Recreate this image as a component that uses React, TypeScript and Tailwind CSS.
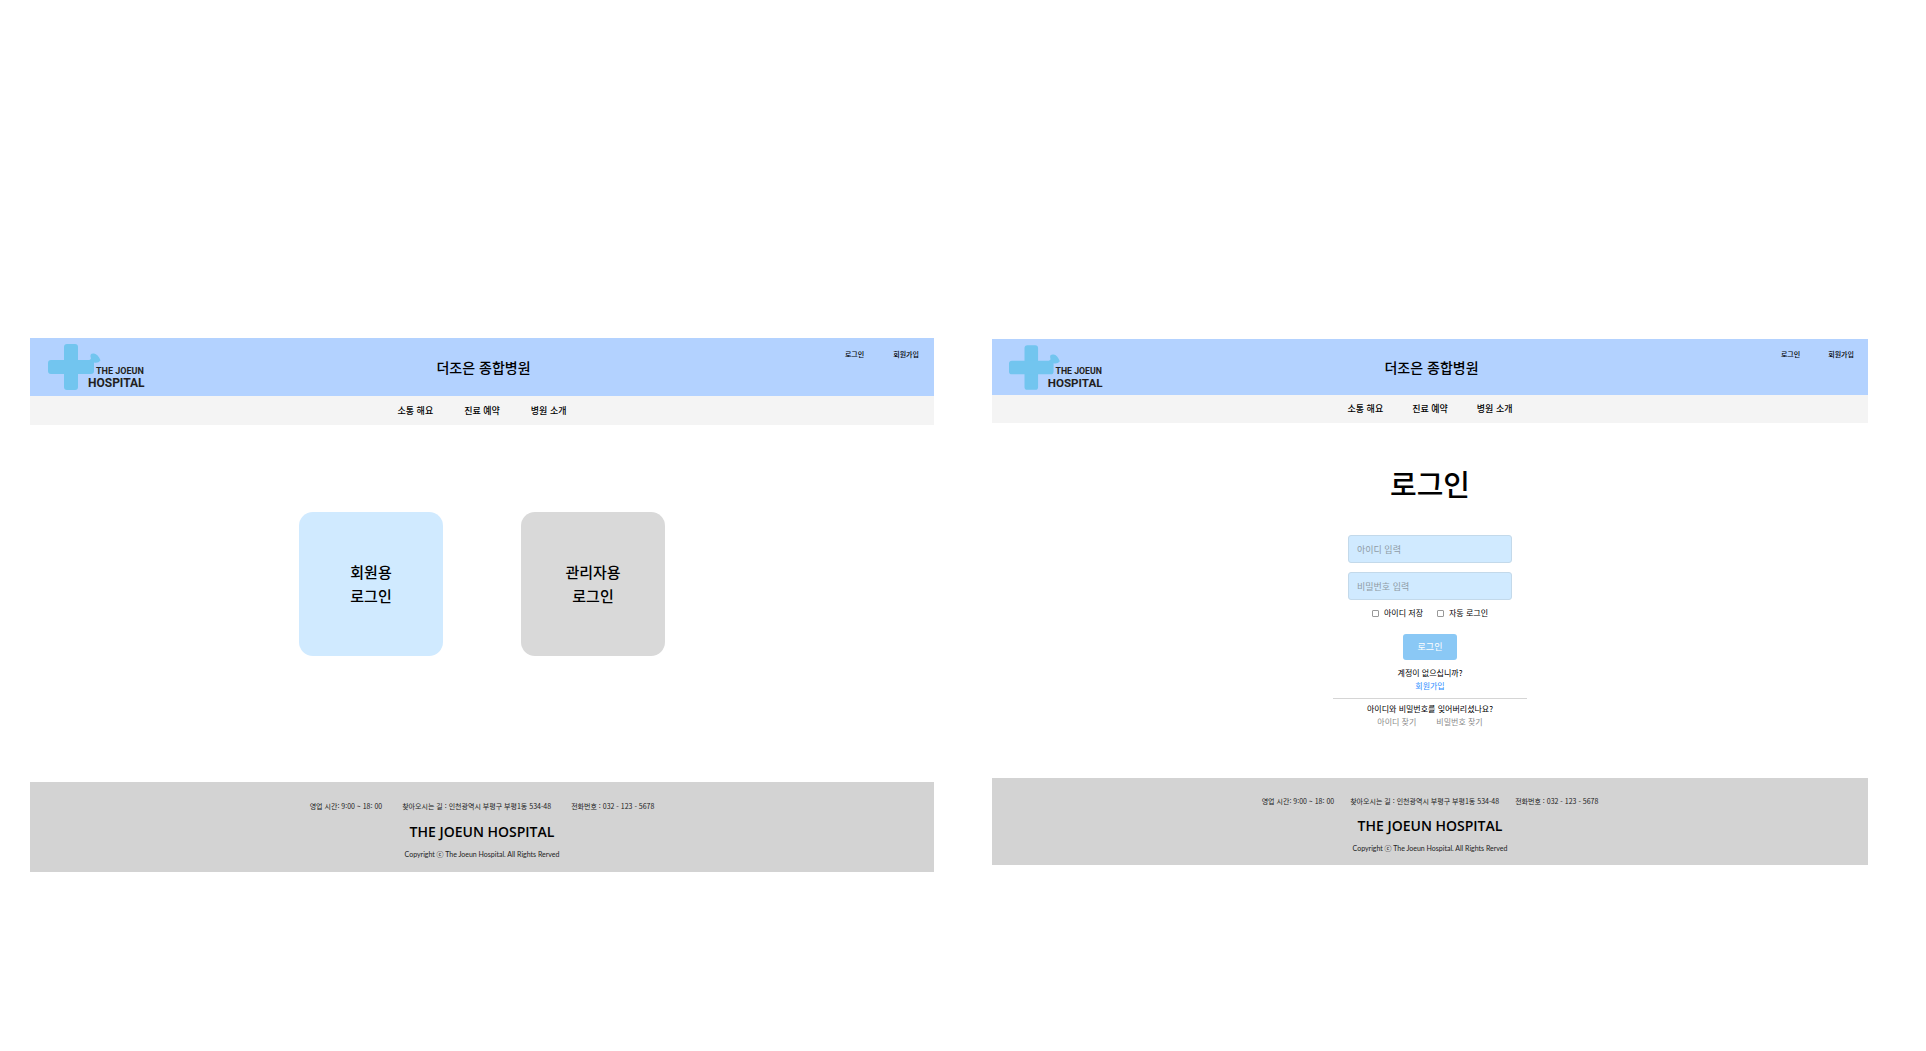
import React from "react";

const NAV = ["소통 해요", "진료 예약", "병원 소개"];

function Logo({ className }: { className: string }) {
  return (
    <svg viewBox="0 0 97 46" className={className} role="img" aria-label="The Joeun Hospital">
      <g fill="#72c5ef">
        <rect x="16" y="0" width="14" height="46" rx="3" />
        <path d="M3 16H41Q42 16 43 14.500Q41 9 46 9.500Q50 10 52.500 16.500Q50 19.500 46 18.500V27Q46 30 43 30H3Q0 30 0 27V19Q0 16 3 16Z" />
      </g>
      <g fill="#231f20" fontFamily="Roboto, sans-serif" fontWeight="700">
        <text x="48" y="30" fontSize="9">THE JOEUN</text>
        <text x="40" y="43" fontSize="12">HOSPITAL</text>
      </g>
    </svg>
  );
}

function Header({ large }: { large: boolean }) {
  return (
    <header>
      <div
        className={`grid grid-cols-[1fr_auto_1fr] items-center bg-[#b3d2ff] ${large ? "h-[58px] pl-[18px] pr-[15px]" : "h-14 pl-[17px] pr-[14px]"}`}
      >
        <a href="#home">
          <Logo className={large ? "h-[46px] w-[97px]" : "h-[45px] w-[94px]"} />
        </a>
        <h1 className="text-[14px] leading-5 font-medium">더조은 종합병원</h1>
        <div
          className={`flex justify-end self-start text-[7px] leading-[10px] font-medium ${large ? "gap-[29px] pt-[11px]" : "gap-7 pt-[10px]"}`}
        >
          <a href="#login">로그인</a>
          <a href="#join">회원가입</a>
        </div>
      </div>
      <nav
        className={`flex items-center justify-center bg-[#f4f4f4] text-[9px] leading-3 font-medium ${large ? "h-[29px] gap-[31px]" : "h-7 gap-[29px]"}`}
      >
        {NAV.map((item) => (
          <a key={item} href="#menu">
            {item}
          </a>
        ))}
      </nav>
    </header>
  );
}

function Footer({ large }: { large: boolean }) {
  return (
    <footer
      className={`flex flex-col items-center bg-[#d3d3d3] ${large ? "h-[90px] pt-[19px]" : "h-[87px] pt-[18px]"}`}
    >
      <p className={`flex text-[7px] leading-[10px] text-[#222] ${large ? "gap-5" : "gap-4"}`}>
        <span>영업 시간: 9:00 ~ 18: 00</span>
        <span>찾아오시는 길 : 인천광역시 부평구 부평1동 534-48</span>
        <span>전화번호 : 032 - 123 - 5678</span>
      </p>
      <p
        className={`font-['Open_Sans',sans-serif] text-[14px] leading-4 font-semibold ${large ? "mt-[13px]" : "mt-3"}`}
      >
        THE JOEUN HOSPITAL
      </p>
      <p className="mt-[9px] font-['Lato','Noto_Sans_CJK_KR',sans-serif] text-[7px] leading-[10px] text-[#222]">
        Copyright ⓒ The Joeun Hospital. All Rights Rerved
      </p>
    </footer>
  );
}

function LoginCard({ label, className }: { label: string; className: string }) {
  return (
    <button
      type="button"
      className={`size-36 rounded-[14px] text-[15px] leading-6 font-medium ${className}`}
    >
      {label}
      <br />
      로그인
    </button>
  );
}

const FIELD =
  "h-7 w-full rounded-[3px] border border-[#c3d9ea] bg-[#d0eaff] px-2 text-[9px] leading-3 placeholder:text-[#8f9ba5]";

function Check({ label }: { label: string }) {
  return (
    <label className="flex items-center gap-[5px]">
      <input
        type="checkbox"
        className="size-[7px] appearance-none rounded-[1px] border border-[#999] bg-white checked:bg-[#8ac8f5]"
      />
      {label}
    </label>
  );
}

function LoginForm() {
  return (
    <form className="flex flex-col items-center pt-[38px] text-[8px] leading-3">
      <h2 className="text-[29px] leading-[44px] font-medium">로그인</h2>
      <div className="mt-[30px] flex w-[164px] flex-col gap-[9px]">
        <input type="text" aria-label="아이디" placeholder="아이디 입력" className={FIELD} />
        <input type="password" aria-label="비밀번호" placeholder="비밀번호 입력" className={FIELD} />
      </div>
      <div className="mt-[7px] flex gap-[14px]">
        <Check label="아이디 저장" />
        <Check label="자동 로그인" />
      </div>
      <button
        type="button"
        className="mt-[15px] h-[26px] w-[54px] rounded-[3px] bg-[#8ac8f5] text-[9px] leading-3 text-white"
      >
        로그인
      </button>
      <p className="mt-[7px]">계정이 없으십니까?</p>
      <a href="#join" className="mt-px text-[#2b8cff]">
        회원가입
      </a>
      <div className="mt-[6px] flex w-[194px] flex-col items-center border-t border-[#d5d5d5] pt-1">
        <p>아이디와 비밀번호를 잊어버리셨나요?</p>
        <div className="mt-px flex gap-5 text-[#8a8a8a]">
          <a href="#find-id">아이디 찾기</a>
          <a href="#find-password">비밀번호 찾기</a>
        </div>
      </div>
    </form>
  );
}

export default function App() {
  return (
    <div
      lang="ko"
      className="grid min-h-screen grid-cols-[904fr_876fr] items-start gap-x-[58px] bg-white pt-[338px] pr-[58px] pl-[30px] font-['Noto_Sans_CJK_KR',sans-serif] text-black"
    >
      <section>
        <Header large />
        <main className="flex justify-center gap-[78px] pt-[87px] pb-[126px]">
          <LoginCard label="회원용" className="bg-[#d0eaff]" />
          <LoginCard label="관리자용" className="bg-[#d9d9d9]" />
        </main>
        <Footer large />
      </section>
      <section className="pt-px">
        <Header large={false} />
        <main className="pb-[50px]">
          <LoginForm />
        </main>
        <Footer large={false} />
      </section>
    </div>
  );
}
